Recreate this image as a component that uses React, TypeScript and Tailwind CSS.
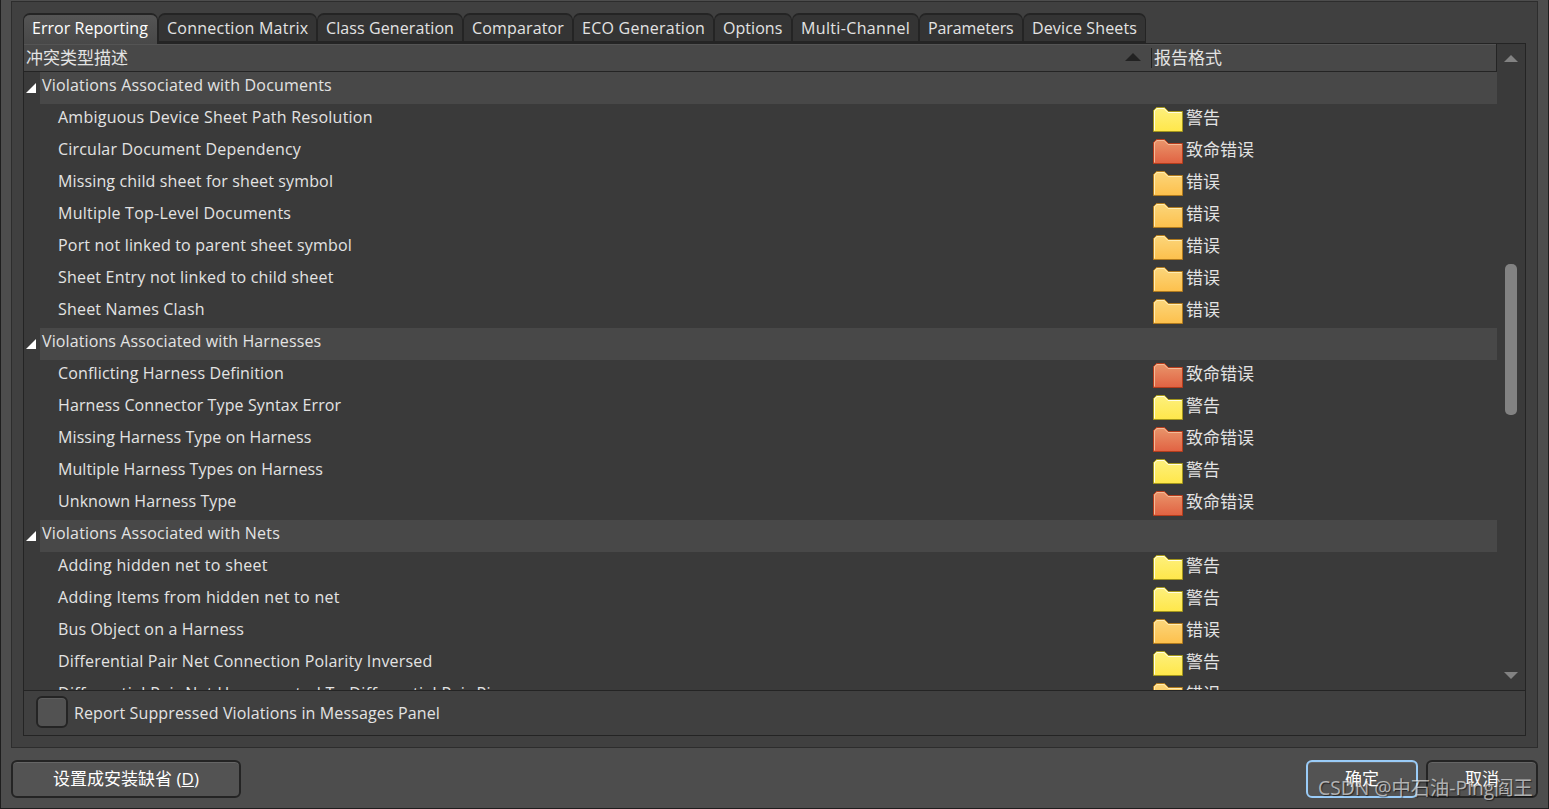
import clsx from 'clsx'

type Level = 'warning' | 'error' | 'fatal'

type Rule = { name: string; level: Level; tracking: string }

const levels: Record<Level, { label: string; top: string; bottom: string; edge: string; shine: string }> = {
  warning: { label: '警告', top: '#fdf07e', bottom: '#ffe74a', edge: '#a3961c', shine: '#fffde4' },
  error: { label: '错误', top: '#fbd67c', bottom: '#fdc04c', edge: '#b07a1e', shine: '#ffedb4' },
  fatal: { label: '致命错误', top: '#e9966c', bottom: '#e16242', edge: '#b63c1c', shine: '#f3bb98' },
}

const tabs = [
  { label: 'Error Reporting', size: 'w-[135px] tracking-[0.04px]' },
  { label: 'Connection Matrix', size: 'w-[159px] tracking-[0.24px]' },
  { label: 'Class Generation', size: 'w-[146px] tracking-[0.1px]' },
  { label: 'Comparator', size: 'w-[110px] tracking-[0.15px]' },
  { label: 'ECO Generation', size: 'w-[141px] tracking-[0.25px]' },
  { label: 'Options', size: 'w-[78px] tracking-[0.05px]' },
  { label: 'Multi-Channel', size: 'w-[127px] tracking-[0.35px]' },
  { label: 'Parameters', size: 'w-[104px] tracking-[-0.1px]' },
  { label: 'Device Sheets', size: 'w-[123px] tracking-[0.13px]' },
]

const groups: { title: string; tracking: string; rules: Rule[] }[] = [
  {
    title: 'Violations Associated with Documents',
    tracking: 'tracking-[0.19px]',
    rules: [
      { name: 'Ambiguous Device Sheet Path Resolution', level: 'warning', tracking: 'tracking-[0.24px]' },
      { name: 'Circular Document Dependency', level: 'fatal', tracking: 'tracking-[0.2px]' },
      { name: 'Missing child sheet for sheet symbol', level: 'error', tracking: 'tracking-[0.14px]' },
      { name: 'Multiple Top-Level Documents', level: 'error', tracking: 'tracking-[0.24px]' },
      { name: 'Port not linked to parent sheet symbol', level: 'error', tracking: 'tracking-[0.19px]' },
      { name: 'Sheet Entry not linked to child sheet', level: 'error', tracking: 'tracking-[0.2px]' },
      { name: 'Sheet Names Clash', level: 'error', tracking: 'tracking-[0.2px]' },
    ],
  },
  {
    title: 'Violations Associated with Harnesses',
    tracking: 'tracking-[0.11px]',
    rules: [
      { name: 'Conflicting Harness Definition', level: 'fatal', tracking: 'tracking-[0.15px]' },
      { name: 'Harness Connector Type Syntax Error', level: 'warning', tracking: 'tracking-[0.12px]' },
      { name: 'Missing Harness Type on Harness', level: 'fatal', tracking: 'tracking-[0.1px]' },
      { name: 'Multiple Harness Types on Harness', level: 'warning', tracking: 'tracking-[0.07px]' },
      { name: 'Unknown Harness Type', level: 'fatal', tracking: 'tracking-[0.08px]' },
    ],
  },
  {
    title: 'Violations Associated with Nets',
    tracking: 'tracking-[0.2px]',
    rules: [
      { name: 'Adding hidden net to sheet', level: 'warning', tracking: 'tracking-[0.3px]' },
      { name: 'Adding Items from hidden net to net', level: 'warning', tracking: 'tracking-[0.29px]' },
      { name: 'Bus Object on a Harness', level: 'error', tracking: 'tracking-[0.15px]' },
      { name: 'Differential Pair Net Connection Polarity Inversed', level: 'warning', tracking: 'tracking-[0.17px]' },
      { name: 'Differential Pair Net Unconnected To Differential Pair Pin', level: 'error', tracking: 'tracking-[0.36px]' },
    ],
  },
]

const Folder = ({ level }: { level: Level }) => {
  const c = levels[level]
  return (
    <svg width="30" height="25" viewBox="0 0 30 25" className="mt-[3px] shrink-0">
      <defs>
        <linearGradient id={`folder-${level}`} x1="0" y1="0" x2="0" y2="1">
          <stop offset="0" stopColor={c.top} />
          <stop offset="1" stopColor={c.bottom} />
        </linearGradient>
      </defs>
      <path
        d="M.5 24.5V3.5L3.5 .5H11.5L15.5 4.5H29.5V24.5Z"
        fill={`url(#folder-${level})`}
        stroke={c.edge}
      />
      <path d="M1.5 23.5V4L4 1.5H11L15 5.5H28.5" fill="none" stroke={c.shine} />
    </svg>
  )
}

const GroupRow = ({ title, tracking }: { title: string; tracking: string }) => (
  <div className="flex h-8 shrink-0">
    <div className="flex w-4 pt-[11px] pl-[2px]">
      <svg width="10" height="10" viewBox="0 0 10 10">
        <path d="M10 0V10H0Z" fill="#fff" />
      </svg>
    </div>
    <div className={clsx('flex-1 bg-[#484848] pl-[2px] leading-[26px]', tracking)}>{title}</div>
  </div>
)

const RuleRow = ({ rule }: { rule: Rule }) => (
  <div className="flex h-8 shrink-0 leading-[26px]">
    <div className={clsx('w-[1129px] shrink-0 pl-[34px]', rule.tracking)}>{rule.name}</div>
    <Folder level={rule.level} />
    <div className="ml-[3px] text-[17px] leading-[28px]">{levels[rule.level].label}</div>
  </div>
)

const Tabs = () => (
  <div className="relative z-10 -mb-px ml-[11px] flex h-[31px] shrink-0">
    {tabs.map((tab, i) => (
      <div
        key={tab.label}
        className={clsx(
          'h-[31px] rounded-t-[7px] border-x border-t-2 border-[#242424] leading-[27px]',
          tab.size,
          i === 0
            ? 'bg-gradient-to-b from-[#555] to-[#484848] pl-2 text-white'
            : 'border-b-3 bg-[#343434] pl-2',
        )}
      >
        {tab.label}
      </div>
    ))}
  </div>
)

const ListHeader = () => (
  <div className="flex h-7 w-[1473px] shrink-0 border-r border-b border-[#242424] bg-[#484848] text-[17px] leading-[28px] shadow-[inset_0_1px_0_#545454]">
    <div className="w-[1101px] pl-[2px]">冲突类型描述</div>
    <svg width="16" height="8" viewBox="0 0 16 8" className="mt-[9px] mr-[10px]">
      <path d="M8 0L16 8H0Z" fill="#222" />
    </svg>
    <div className="mt-1 h-5 w-px bg-[#242424]" />
    <div className="ml-[2px]">报告格式</div>
  </div>
)

const Scrollbar = () => (
  <div className="flex w-7 shrink-0 flex-col items-center pt-[11px]">
    <svg width="14" height="7" viewBox="0 0 14 7">
      <path d="M7 0L14 7H0Z" fill="#828282" />
    </svg>
    <div className="mt-[202px] h-[151px] w-3 rounded-[5px] bg-[#828282]" />
    <svg width="14" height="7" viewBox="0 0 14 7" className="mt-[257px]">
      <path d="M0 0H14L7 7Z" fill="#828282" />
    </svg>
  </div>
)

const buttonBase =
  'h-[38px] rounded-[6px] border-2 bg-[#535353] text-[17px] leading-[34px] text-white shadow-[inset_0_1px_0_#666]'

export default function App() {
  return (
    <div className="relative flex h-[809px] w-[1549px] flex-col overflow-hidden border-x border-b border-[#1e1e1e] bg-[#4d4d4d] px-[10px] pt-px font-['Open_Sans','Noto_Sans_CJK_SC',sans-serif] text-[16px] whitespace-nowrap text-[#e3e3e3]">
      <div className="flex h-[747px] shrink-0 flex-col border border-[#2d2d2d] bg-[#404040] pt-[11px]">
        <Tabs />
        <div className="mx-[11px] flex h-[693px] flex-col border border-[#242424]">
          <div className="flex h-[646px] shrink-0 bg-[#3a3a3a]">
            <div className="flex w-[1473px] shrink-0 flex-col overflow-hidden">
              <ListHeader />
              {groups.map((group) => (
                <div key={group.title} className="shrink-0">
                  <GroupRow title={group.title} tracking={group.tracking} />
                  {group.rules.map((rule) => (
                    <RuleRow key={rule.name} rule={rule} />
                  ))}
                </div>
              ))}
            </div>
            <Scrollbar />
          </div>
          <div className="flex flex-1 border-t border-[#242424] pt-[5px] pl-3">
            <div className="h-8 w-8 rounded-[6px] border-2 border-[#242424] bg-[#525252] shadow-[inset_0_1px_0_#5e5e5e]" />
            <span className="ml-[6px] leading-[34px] tracking-[0.13px]">
              Report Suppressed Violations in Messages Panel
            </span>
          </div>
        </div>
      </div>

      <div className="mt-3 flex">
        <button className={clsx(buttonBase, 'w-[230px] border-[#242424]')}>
          设置成安装缺省 (<span className="underline">D</span>)
        </button>
        <button className={clsx(buttonBase, 'ml-auto w-28 border-[#9accf8]')}>确定</button>
        <button className={clsx(buttonBase, 'ml-2 w-28 border-[#242424]')}>取消</button>
      </div>

      <div className="absolute top-[775px] left-[1317px] text-[19.3px] leading-[26px] text-white/60 [text-shadow:1px_1px_1px_#0008]">
        CSDN @中石油-Ping阎王
      </div>
    </div>
  )
}
